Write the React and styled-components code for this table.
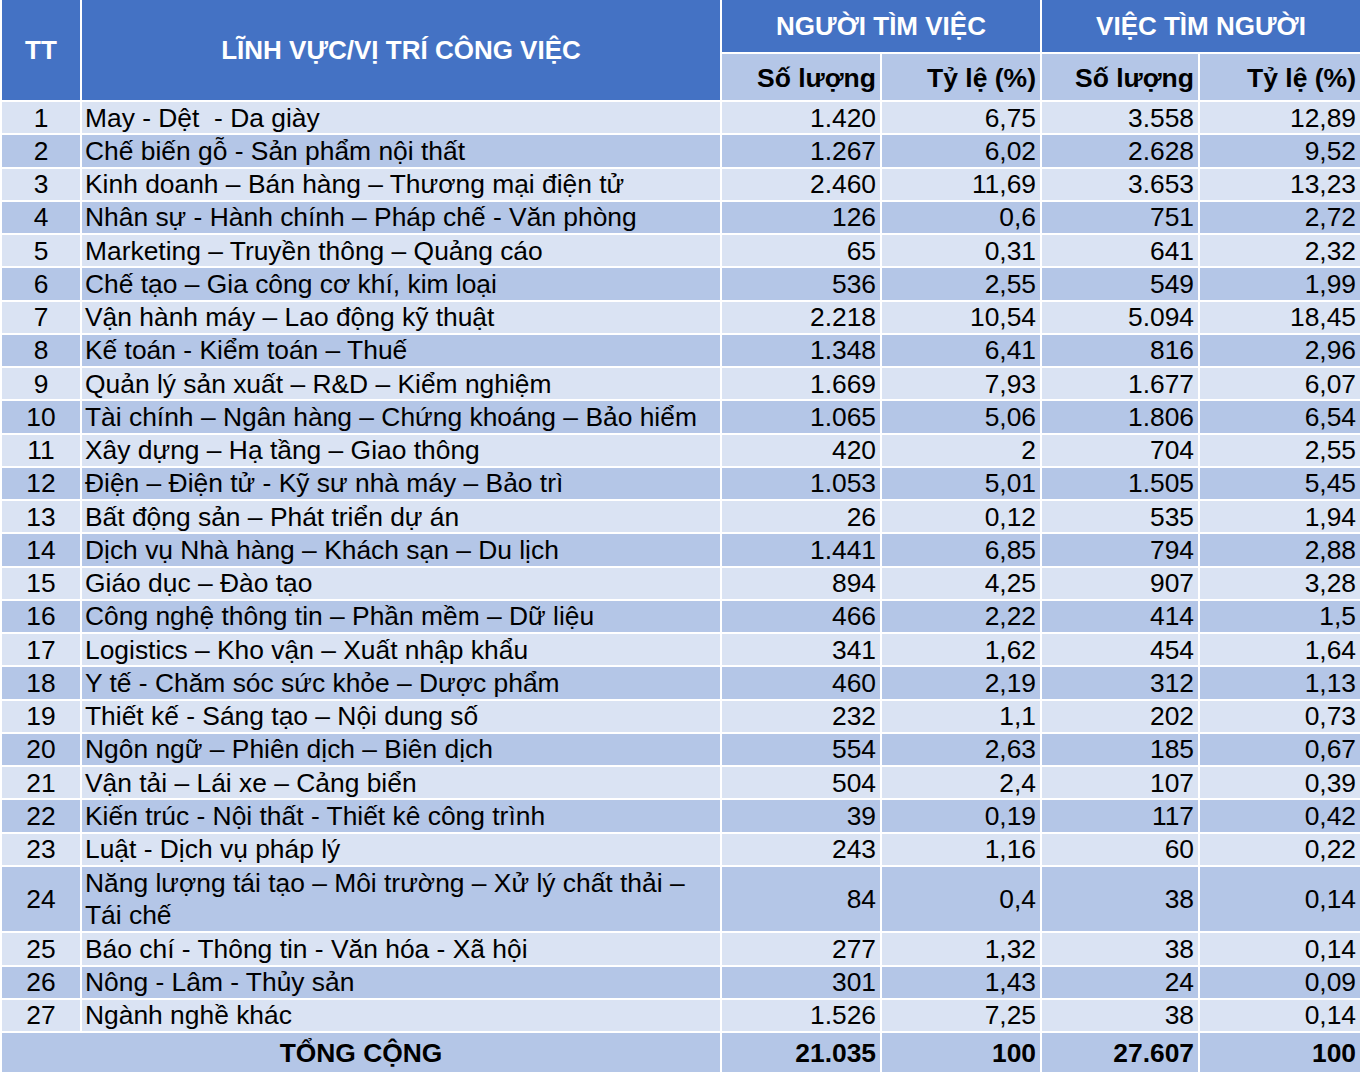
import React from "react";
import styled, {createGlobalStyle} from "styled-components";

const GlobalStyle = createGlobalStyle`
    html, body {
        margin: 0;
        padding: 0;
        background: #ffffff;
    }
`;

const rows = [
    ["1", "May - Dệt\u00a0 - Da giày", "1.420", "6,75", "3.558", "12,89"],
    ["2", "Chế biến gỗ - Sản phẩm nội thất", "1.267", "6,02", "2.628", "9,52"],
    ["3", "Kinh doanh – Bán hàng – Thương mại điện tử", "2.460", "11,69", "3.653", "13,23"],
    ["4", "Nhân sự - Hành chính – Pháp chế - Văn phòng", "126", "0,6", "751", "2,72"],
    ["5", "Marketing – Truyền thông – Quảng cáo", "65", "0,31", "641", "2,32"],
    ["6", "Chế tạo – Gia công cơ khí, kim loại", "536", "2,55", "549", "1,99"],
    ["7", "Vận hành máy – Lao động kỹ thuật", "2.218", "10,54", "5.094", "18,45"],
    ["8", "Kế toán - Kiểm toán – Thuế", "1.348", "6,41", "816", "2,96"],
    ["9", "Quản lý sản xuất – R&D – Kiểm nghiệm", "1.669", "7,93", "1.677", "6,07"],
    ["10", "Tài chính – Ngân hàng – Chứng khoáng – Bảo hiểm", "1.065", "5,06", "1.806", "6,54"],
    ["11", "Xây dựng – Hạ tầng – Giao thông", "420", "2", "704", "2,55"],
    ["12", "Điện – Điện tử - Kỹ sư nhà máy – Bảo trì", "1.053", "5,01", "1.505", "5,45"],
    ["13", "Bất động sản – Phát triển dự án", "26", "0,12", "535", "1,94"],
    ["14", "Dịch vụ Nhà hàng – Khách sạn – Du lịch", "1.441", "6,85", "794", "2,88"],
    ["15", "Giáo dục – Đào tạo", "894", "4,25", "907", "3,28"],
    ["16", "Công nghệ thông tin – Phần mềm – Dữ liệu", "466", "2,22", "414", "1,5"],
    ["17", "Logistics – Kho vận – Xuất nhập khẩu", "341", "1,62", "454", "1,64"],
    ["18", "Y tế - Chăm sóc sức khỏe – Dược phẩm", "460", "2,19", "312", "1,13"],
    ["19", "Thiết kế - Sáng tạo – Nội dung số", "232", "1,1", "202", "0,73"],
    ["20", "Ngôn ngữ – Phiên dịch – Biên dịch", "554", "2,63", "185", "0,67"],
    ["21", "Vận tải – Lái xe – Cảng biển", "504", "2,4", "107", "0,39"],
    ["22", "Kiến trúc - Nội thất - Thiết kê công trình", "39", "0,19", "117", "0,42"],
    ["23", "Luật - Dịch vụ pháp lý", "243", "1,16", "60", "0,22"],
    ["24", "Năng lượng tái tạo – Môi trường – Xử lý chất thải – Tái chế", "84", "0,4", "38", "0,14"],
    ["25", "Báo chí - Thông tin - Văn hóa - Xã hội", "277", "1,32", "38", "0,14"],
    ["26", "Nông - Lâm - Thủy sản", "301", "1,43", "24", "0,09"],
    ["27", "Ngành nghề khác", "1.526", "7,25", "38", "0,14"],
];

const Table = styled.table`
    width: 1360px;
    table-layout: fixed;
    border-collapse: collapse;
    font-family: "Liberation Sans", Arial, sans-serif;
    color: #000;
`;

const HeadCell = styled.th`
    background: #4472c4;
    color: #ffffff;
    font-size: 26px;
    font-weight: 700;
    text-align: center;
    border: 2px solid #ffffff;
    border-top: none;
    padding: 0;
    height: 52px;
`;

const SubHeadCell = styled.th`
    background: #b4c6e7;
    font-size: 26.5px;
    font-weight: 700;
    text-align: right;
    padding: 2px 4px 0 0;
    border: 2px solid #ffffff;
    height: 44px;
`;

const Row = styled.tr`
    background: ${p => (p.$alt ? "#b4c6e7" : "#dae3f3")};
`;

const Cell = styled.td`
    font-size: 26.4px;
    font-weight: ${p => (p.$bold ? 700 : 400)};
    text-align: ${p => p.$align || "right"};
    padding: ${p => (p.$align === "left" ? "0 4px 0 3px" : p.$align === "center" ? "0" : "0 4px 0 0")};
    border: 2px solid #ffffff;
    height: ${p => p.$h || 31.26}px;
    line-height: ${p => (p.$wrap ? 32 : 28)}px;
    vertical-align: middle;
    white-space: ${p => (p.$wrap ? "normal" : "nowrap")};
`;

const TotalRow = styled(Row)`
    & > td {
        border-bottom: none;
        height: 40px;
        font-weight: 700;
    }
`;

export default function App() {
    return (
        <>
            <GlobalStyle/>
            <Table>
                <colgroup>
                    <col style={{width: 80}}/>
                    <col style={{width: 640}}/>
                    <col style={{width: 160}}/>
                    <col style={{width: 160}}/>
                    <col style={{width: 158}}/>
                    <col style={{width: 162}}/>
                </colgroup>
                <thead>
                <tr>
                    <HeadCell rowSpan={2}>TT</HeadCell>
                    <HeadCell rowSpan={2}>LĨNH VỰC/VỊ TRÍ CÔNG VIỆC</HeadCell>
                    <HeadCell colSpan={2}>NGƯỜI TÌM VIỆC</HeadCell>
                    <HeadCell colSpan={2}>VIỆC TÌM NGƯỜI</HeadCell>
                </tr>
                <tr>
                    <SubHeadCell>Số lượng</SubHeadCell>
                    <SubHeadCell>Tỷ lệ (%)</SubHeadCell>
                    <SubHeadCell>Số lượng</SubHeadCell>
                    <SubHeadCell>Tỷ lệ (%)</SubHeadCell>
                </tr>
                </thead>
                <tbody>
                {rows.map(([tt, name, a, b, c, d], i) => {
                    const tall = tt === "24";
                    return (
                        <Row key={tt} $alt={i % 2 === 1}>
                            <Cell $align="center" $h={tall ? 64.5 : 31.26}>{tt}</Cell>
                            <Cell $align="left" $wrap={tall}>{name}</Cell>
                            <Cell>{a}</Cell>
                            <Cell>{b}</Cell>
                            <Cell>{c}</Cell>
                            <Cell>{d}</Cell>
                        </Row>
                    );
                })}
                <TotalRow $alt>
                    <Cell colSpan={2} $align="center">TỔNG CỘNG</Cell>
                    <Cell>21.035</Cell>
                    <Cell>100</Cell>
                    <Cell>27.607</Cell>
                    <Cell>100</Cell>
                </TotalRow>
                </tbody>
            </Table>
        </>
    );
}
